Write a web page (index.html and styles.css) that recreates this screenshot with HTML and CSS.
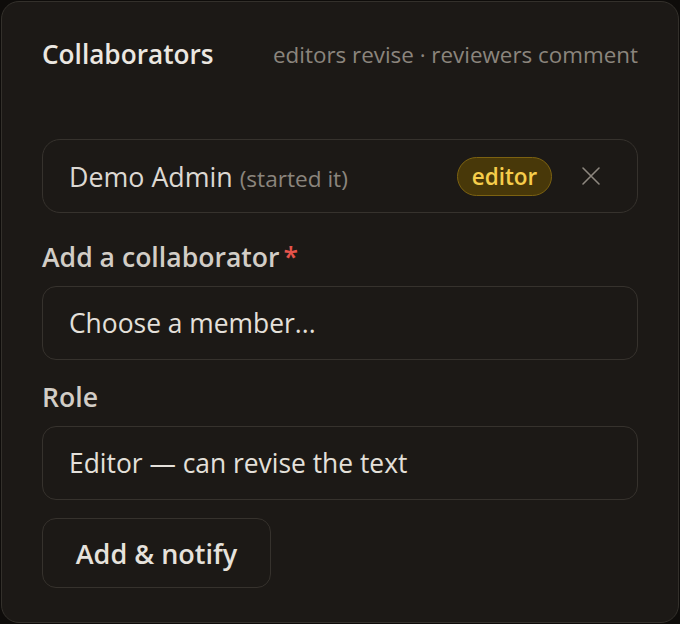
FILE: index.html
```html
<!DOCTYPE html>
<html lang="en">
<head>
<meta charset="utf-8">
<title>Collaborators</title>
<link rel="stylesheet" href="styles.css">
</head>
<body>
<section class="card">
  <header class="card-head">
    <h2 class="title">Collaborators</h2>
    <span class="hint">editors revise · reviewers comment</span>
  </header>

  <div class="person">
    <span class="person-name">Demo Admin <span class="person-note">(started it)</span></span>
    <span class="badge">editor</span>
    <button class="remove" type="button" aria-label="Remove">
      <svg viewBox="0 0 20 20" width="20" height="20"><path d="M2 2 L18 18 M18 2 L2 18" stroke="currentColor" stroke-width="1.6" stroke-linecap="round" fill="none"/></svg>
    </button>
  </div>

  <div class="field field-first">
    <label class="label">Add a collaborator<span class="req">*</span></label>
    <div class="control">Choose a member...</div>
  </div>

  <div class="field">
    <label class="label">Role</label>
    <div class="control">Editor — can revise the text</div>
  </div>

  <button class="submit" type="button">Add &amp; notify</button>
</section>
</body>
</html>
```

FILE: styles.css
```css
* { box-sizing: border-box; }

html, body {
  margin: 0;
  background: #0e0c0a;
}

body {
  padding: 1px;
  font-family: "Open Sans", "Noto Sans", sans-serif;
  color: #e4e0da;
}

.card {
  width: 678px;
  height: 622px;
  background: #1c1916;
  border: 1px solid #33302b;
  border-radius: 18px;
  padding: 32px 40px 0 40px;
}

.card-head {
  display: flex;
  align-items: center;
  justify-content: space-between;
  height: 40px;
  margin-bottom: 65px;
}

.title {
  margin: 0;
  font-size: 26.2px;
  font-weight: 600;
  color: #ebe7e1;
}

.hint {
  font-size: 22.4px;
  color: #8b857d;
}

.person {
  display: flex;
  align-items: center;
  height: 74px;
  border: 1px solid #36322d;
  border-radius: 18px;
  padding: 0 36px 0 26px;
}

.person-name {
  flex: 1;
  font-size: 26.8px;
  color: #dcd8d2;
}

.person-note {
  font-size: 22.6px;
  color: #8b857d;
}

.badge {
  display: inline-flex;
  align-items: center;
  justify-content: center;
  width: 95px;
  height: 39px;
  border-radius: 20px;
  background: #483809;
  border: 1.5px solid #7c6211;
  color: #f6cd4b;
  font-size: 22.5px;
  font-weight: 600;
  margin-right: 29px;
}

.remove {
  display: flex;
  padding: 0;
  border: 0;
  background: none;
  color: #8d877f;
}

.field {
  margin-top: 21px;
}

.field-first {
  margin-top: 28px;
}

.label {
  display: block;
  height: 32px;
  line-height: 32px;
  margin-bottom: 13px;
  font-size: 26.6px;
  font-weight: 600;
  color: #d2cdc6;
}

.req {
  color: #e5534b;
  margin-left: 4px;
}

.control {
  display: flex;
  align-items: center;
  height: 74px;
  border: 1px solid #36322d;
  border-radius: 14px;
  padding: 0 26px;
  font-size: 26.4px;
  color: #e4e0da;
}

.submit {
  display: block;
  margin-top: 18px;
  width: 229px;
  height: 70px;
  border: 1px solid #36322d;
  border-radius: 14px;
  background: #1c1916;
  font-family: inherit;
  font-size: 27px;
  font-weight: 600;
  color: #e6e2dc;
}
```
